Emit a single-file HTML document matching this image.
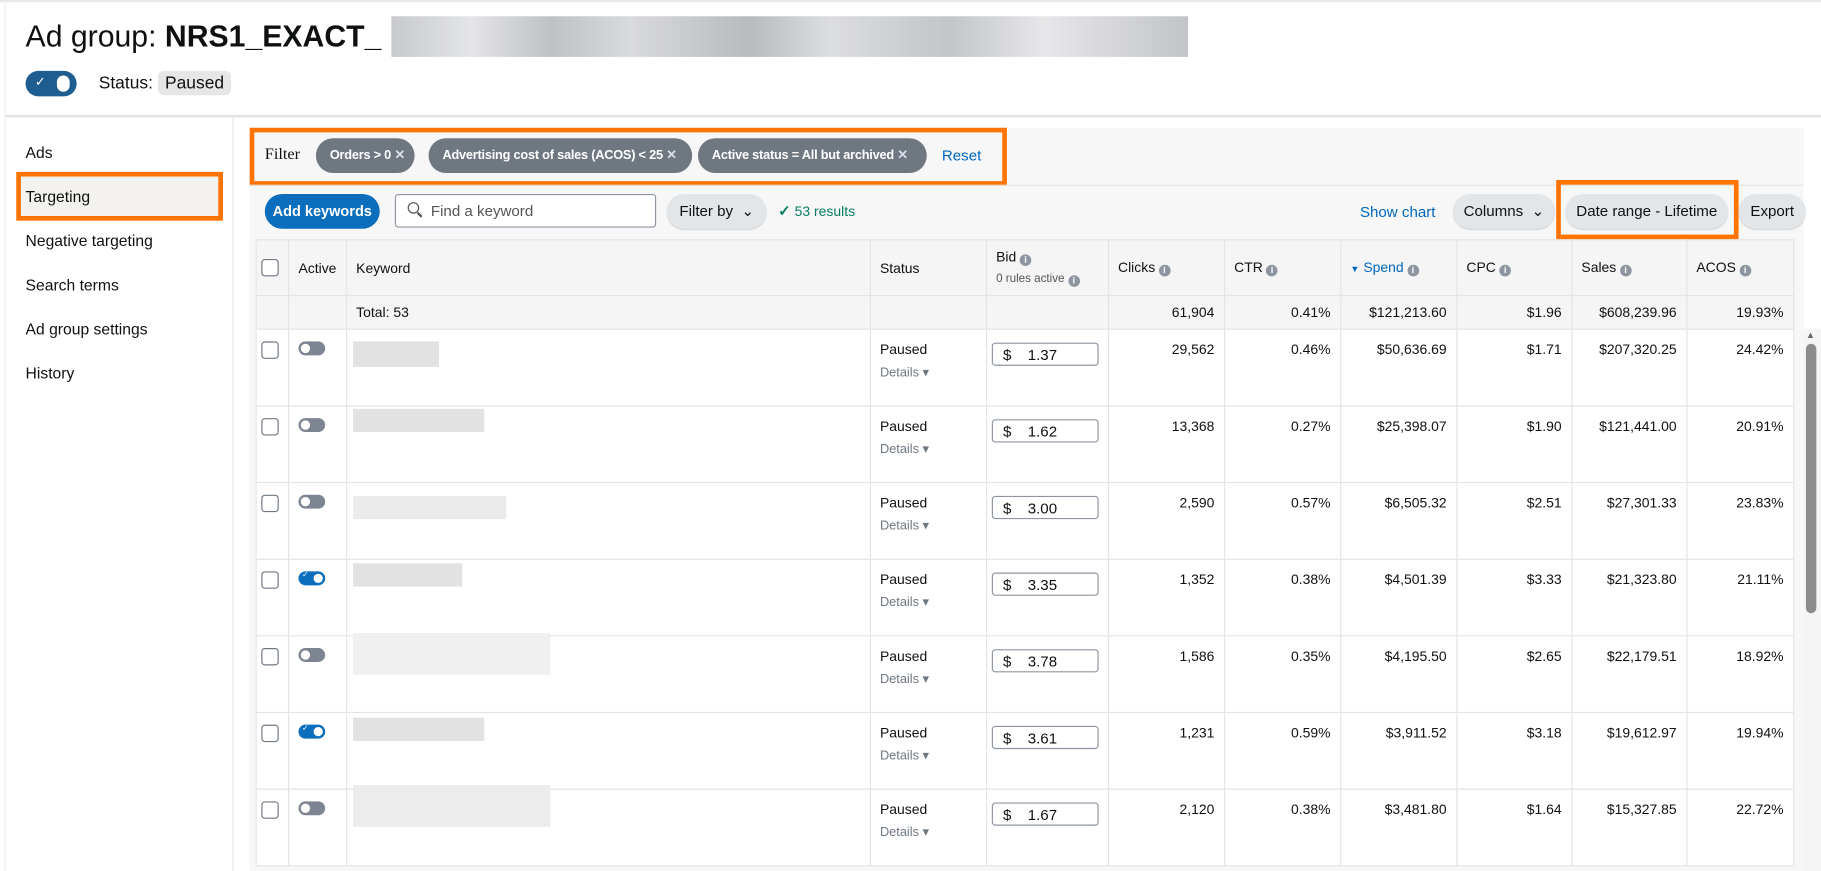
<!DOCTYPE html>
<html><head><meta charset="utf-8"><style>
html,body{margin:0;padding:0;background:#fff;overflow:hidden;width:1821px;height:871px}
#w{position:absolute;left:0;top:0;width:1568px;height:750px;overflow:hidden;transform:scale(1.16135);transform-origin:0 0;font-family:"Liberation Sans",sans-serif;color:#0f1111}
.a{position:absolute}
.chip{position:absolute;top:119px;height:30px;border-radius:15px;background:#6f7781;color:#fff;font-size:11px;font-weight:bold;line-height:30px;padding:0 0 0 12px;box-sizing:border-box;white-space:nowrap;overflow:hidden;letter-spacing:-0.2px}
.chip i{font-style:normal;color:#dde;font-size:11px}
.btn{position:absolute;top:167px;height:30px;border-radius:15px;background:#e3e6e9;font-size:13px;line-height:30px;text-align:center;box-sizing:border-box;box-shadow:0 1px 1px rgba(0,0,0,.15);white-space:nowrap}
table{position:absolute;left:220px;top:206px;border-collapse:collapse;table-layout:fixed;font-size:12px}
td{border:1px solid #e4e4e4;vertical-align:top;padding:0 8px;box-sizing:border-box;background:#fff}
tr.h td{background:#f5f5f5;height:48px;vertical-align:middle}
tr.t td{background:#f5f5f5;height:29px;vertical-align:middle}
tr.r td{height:66px;padding-top:10px}
.n{text-align:right}
.cb{width:13px;height:13px;border:1px solid #6f7781;border-radius:3px;background:#fff;margin-left:-4px}
.tg{width:23px;height:12px;border-radius:6px;background:#7c8591;position:relative;margin-top:0}
.tg:after{content:"";position:absolute;left:2px;top:2px;width:8px;height:8px;border-radius:50%;background:#fff}
.tg.on{background:#0a6ebd}.tg.on:after{left:13px}
.tg.on:before{content:"✓";position:absolute;left:3px;top:-1px;color:#fff;font-size:7px}
.bid{width:92px;height:20px;border:1px solid #8d96a0;border-radius:3px;margin-left:-4px;font-size:13px;line-height:20px;box-sizing:border-box;padding-left:9px;margin-top:1px}
.bid b{font-weight:normal;margin-left:14px}
.i{display:inline-block;width:10px;height:10px;border-radius:50%;background:#8d96a0;color:#fff;font-size:8px;line-height:10px;text-align:center;font-weight:bold;vertical-align:-1px;margin-left:3px}
.det{color:#6f7781;font-size:11px;margin-top:6px}
.bl{position:absolute;background:#e2e2e2}
</style></head><body><div id="w">
<div class="a" style="left:0;top:0;width:1568px;height:2px;background:#e8e8e8"></div>
<div class="a" style="left:22px;top:14px;font-size:26px;line-height:34px">Ad group: <b>NRS1_EXACT_</b></div>
<div class="a" style="left:337px;top:14px;width:686px;height:35px;background:linear-gradient(90deg,#c8c9cc,#e4e5e7 10%,#bfc1c4 20%,#d9dadc 30%,#b8babd 45%,#dcdde0 55%,#c3c5c8 70%,#e7e7e9 82%,#c2c4c7)"></div>
<div class="a" style="left:22px;top:61px;width:44px;height:22px;border-radius:11px;background:#1e5d8f"><div class="a" style="left:27px;top:4px;width:11px;height:14px;border-radius:6px;background:#fff"></div><div class="a" style="left:8px;top:3px;color:#fff;font-size:11px">✓</div></div>
<div class="a" style="left:85px;top:63px;font-size:15px">Status:</div>
<div class="a" style="left:136px;top:61px;width:63px;height:21px;border-radius:5px;background:#e6e6e6;font-size:15px;line-height:21px;text-align:center">Paused</div>
<div class="a" style="left:4px;top:99px;width:1564px;height:2px;background:#e3e3e3"></div>
<div class="a" style="left:4px;top:0;width:1px;height:750px;background:#eee"></div>
<div class="a" style="left:200px;top:101px;width:1px;height:649px;background:#e8e8e8"></div>
<div class="a" style="left:22px;top:124px;font-size:13.5px;line-height:16px">Ads</div>
<div class="a" style="left:14px;top:148px;width:178px;height:42px;border:4px solid #ff7300;box-sizing:border-box;background:#f3f2ef"></div>
<div class="a" style="left:22px;top:162px;font-size:13.5px">Targeting</div>
<div class="a" style="left:22px;top:200px;font-size:13.5px">Negative targeting</div>
<div class="a" style="left:22px;top:238px;font-size:13.5px">Search terms</div>
<div class="a" style="left:22px;top:276px;font-size:13.5px">Ad group settings</div>
<div class="a" style="left:22px;top:314px;font-size:13.5px">History</div>
<div class="a" style="left:215px;top:110px;width:1338px;height:640px;background:#f7f7f7"></div>
<div class="a" style="left:215px;top:110px;width:652px;height:50px;border:4px solid #ff7300;box-sizing:border-box;background:#f7f7f7"></div>
<div class="a" style="left:228px;top:126px;font-family:'Liberation Serif',serif;font-size:14px">Filter</div>
<div class="chip" style="left:272px;width:85px">Orders &gt; 0 <i>✕</i></div>
<div class="chip" style="left:369px;width:227px">Advertising cost of sales (ACOS) &lt; 25 <i>✕</i></div>
<div class="chip" style="left:601px;width:197px">Active status = All but archived <i>✕</i></div>
<div class="a" style="left:811px;top:126px;font-size:13px;color:#0066c0">Reset</div>
<div class="a" style="left:215px;top:159px;width:1338px;height:1px;background:#e4e4e4"></div>
<div class="a" style="left:228px;top:167px;width:99px;height:30px;border-radius:15px;background:#0a6ebd;color:#fff;font-size:12.5px;font-weight:bold;line-height:30px;text-align:center;white-space:nowrap">Add keywords</div>
<div class="a" style="left:340px;top:167px;width:225px;height:29px;border:1px solid #8d96a0;border-radius:3px;background:#fff;box-sizing:border-box"><div class="a" style="left:10px;top:6px;width:8px;height:8px;border:1.5px solid #555;border-radius:50%"></div><div class="a" style="left:18px;top:16px;width:5px;height:1.5px;background:#555;transform:rotate(45deg)"></div><div class="a" style="left:30px;top:6px;font-size:13px;color:#555">Find a keyword</div></div>
<div class="btn" style="left:574px;width:86px;text-align:left;padding-left:11px">Filter by&nbsp;&nbsp;⌄</div>
<div class="a" style="left:670px;top:174px;font-size:12px;color:#067d62"><b style="font-size:13px">✓</b> 53 results</div>
<div class="a" style="left:1171px;top:175px;font-size:13px;color:#0066c0">Show chart</div>
<div class="btn" style="left:1251px;width:88px">Columns&nbsp;&nbsp;⌄</div>
<div class="a" style="left:1340px;top:155px;width:157px;height:51px;border:4px solid #ff7300;box-sizing:border-box"></div>
<div class="btn" style="left:1348px;width:140px">Date range - Lifetime</div>
<div class="btn" style="left:1497px;width:58px">Export</div>
<table>
<colgroup><col style="width:27px"><col style="width:49px"><col style="width:451px"><col style="width:100px"><col style="width:103px"><col style="width:100px"><col style="width:100px"><col style="width:100px"><col style="width:99px"><col style="width:99px"><col style="width:92px"></colgroup>
<tr class="h"><td><div class="cb"></div></td><td>Active</td><td>Keyword</td><td>Status</td><td>Bid<span class="i">i</span><div style="font-size:10px;color:#555;margin-top:6px">0 rules active<span class="i">i</span></div></td><td>Clicks<span class="i">i</span></td><td>CTR<span class="i">i</span></td><td style="color:#0066c0"><span style="font-size:8px">▼</span> Spend<span class="i">i</span></td><td>CPC<span class="i">i</span></td><td>Sales<span class="i">i</span></td><td>ACOS<span class="i">i</span></td></tr>
<tr class="t"><td></td><td></td><td>Total: 53</td><td></td><td></td><td class="n">61,904</td><td class="n">0.41%</td><td class="n">$121,213.60</td><td class="n">$1.96</td><td class="n">$608,239.96</td><td class="n">19.93%</td></tr>
<tr class="r"><td><div class="cb"></div></td><td><div class="tg"></div></td><td></td><td>Paused<div class="det">Details ▾</div></td><td><div class="bid">$<b>1.37</b></div></td><td class="n">29,562</td><td class="n">0.46%</td><td class="n">$50,636.69</td><td class="n">$1.71</td><td class="n">$207,320.25</td><td class="n">24.42%</td></tr>
<tr class="r"><td><div class="cb"></div></td><td><div class="tg"></div></td><td></td><td>Paused<div class="det">Details ▾</div></td><td><div class="bid">$<b>1.62</b></div></td><td class="n">13,368</td><td class="n">0.27%</td><td class="n">$25,398.07</td><td class="n">$1.90</td><td class="n">$121,441.00</td><td class="n">20.91%</td></tr>
<tr class="r"><td><div class="cb"></div></td><td><div class="tg"></div></td><td></td><td>Paused<div class="det">Details ▾</div></td><td><div class="bid">$<b>3.00</b></div></td><td class="n">2,590</td><td class="n">0.57%</td><td class="n">$6,505.32</td><td class="n">$2.51</td><td class="n">$27,301.33</td><td class="n">23.83%</td></tr>
<tr class="r"><td><div class="cb"></div></td><td><div class="tg on"></div></td><td></td><td>Paused<div class="det">Details ▾</div></td><td><div class="bid">$<b>3.35</b></div></td><td class="n">1,352</td><td class="n">0.38%</td><td class="n">$4,501.39</td><td class="n">$3.33</td><td class="n">$21,323.80</td><td class="n">21.11%</td></tr>
<tr class="r"><td><div class="cb"></div></td><td><div class="tg"></div></td><td></td><td>Paused<div class="det">Details ▾</div></td><td><div class="bid">$<b>3.78</b></div></td><td class="n">1,586</td><td class="n">0.35%</td><td class="n">$4,195.50</td><td class="n">$2.65</td><td class="n">$22,179.51</td><td class="n">18.92%</td></tr>
<tr class="r"><td><div class="cb"></div></td><td><div class="tg on"></div></td><td></td><td>Paused<div class="det">Details ▾</div></td><td><div class="bid">$<b>3.61</b></div></td><td class="n">1,231</td><td class="n">0.59%</td><td class="n">$3,911.52</td><td class="n">$3.18</td><td class="n">$19,612.97</td><td class="n">19.94%</td></tr>
<tr class="r"><td><div class="cb"></div></td><td><div class="tg"></div></td><td></td><td>Paused<div class="det">Details ▾</div></td><td><div class="bid">$<b>1.67</b></div></td><td class="n">2,120</td><td class="n">0.38%</td><td class="n">$3,481.80</td><td class="n">$1.64</td><td class="n">$15,327.85</td><td class="n">22.72%</td></tr>
</table>
<div class="bl" style="left:304px;top:294px;width:74px;height:22px"></div>
<div class="bl" style="left:304px;top:352px;width:113px;height:20px"></div>
<div class="bl" style="left:304px;top:427px;width:132px;height:20px;background:#ebebeb"></div>
<div class="bl" style="left:304px;top:485px;width:94px;height:20px"></div>
<div class="bl" style="left:304px;top:545px;width:170px;height:36px;background:#f0f0f0"></div>
<div class="bl" style="left:304px;top:618px;width:113px;height:20px"></div>
<div class="bl" style="left:304px;top:676px;width:170px;height:36px;background:#ececec"></div>
<div class="a" style="left:1553px;top:283px;width:15px;height:467px;background:#f5f5f5"></div>
<div class="a" style="left:1555px;top:296px;width:9px;height:232px;border-radius:5px;background:#8c8c8c"></div>
<div class="a" style="left:1555px;top:284px;font-size:8px;color:#666">▲</div>
</div></body></html>
